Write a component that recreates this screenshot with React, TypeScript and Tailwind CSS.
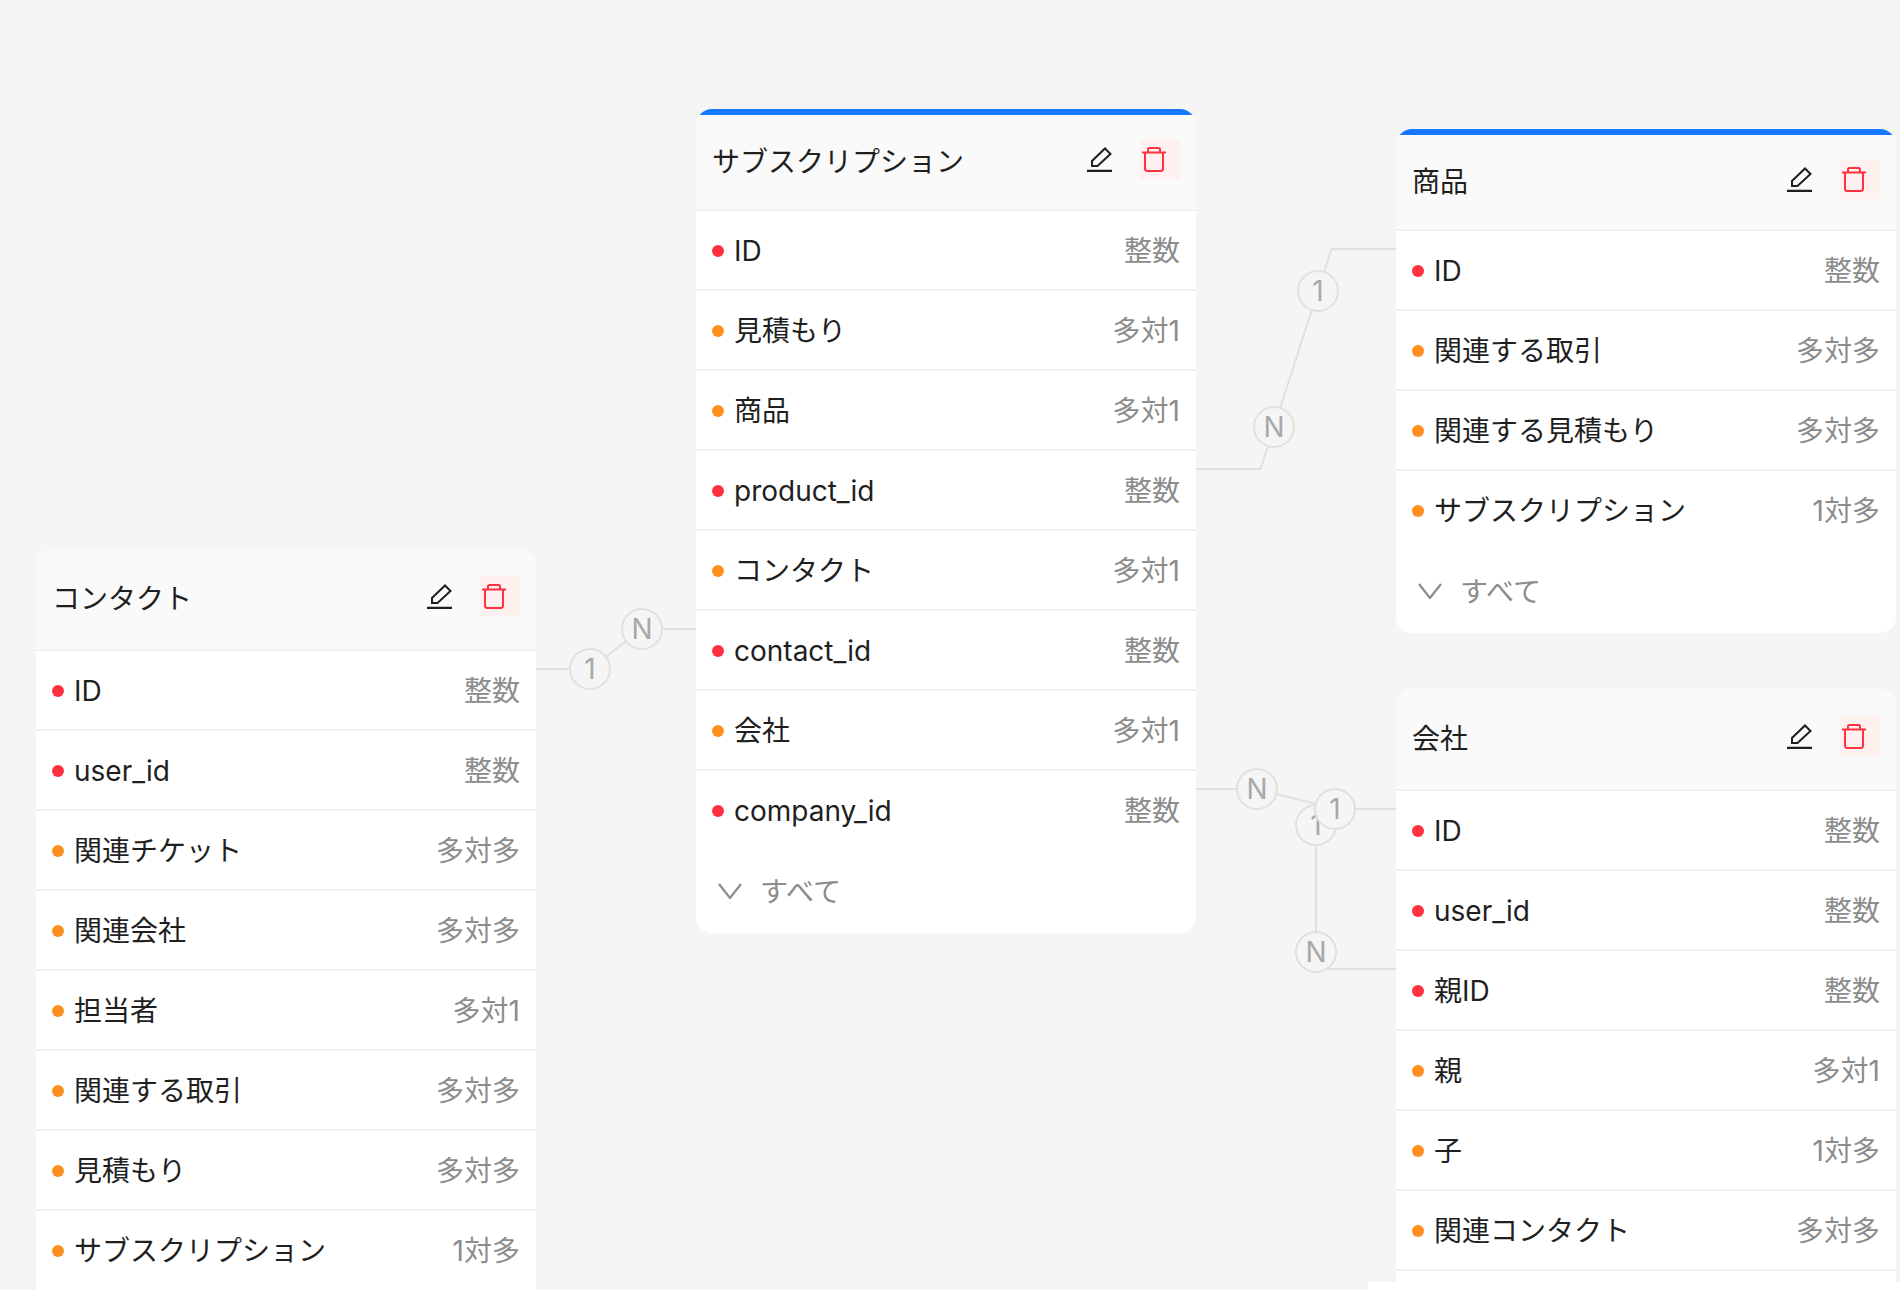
const fontStack = "font-['Inter','Noto_Sans_CJK_JP',sans-serif]";

type Field = { name: string; type: string; key?: boolean; bare?: boolean };

const contactFields: Field[] = [
  { name: "ID", type: "整数", key: true },
  { name: "user_id", type: "整数", key: true },
  { name: "関連チケット", type: "多対多" },
  { name: "関連会社", type: "多対多" },
  { name: "担当者", type: "多対1" },
  { name: "関連する取引", type: "多対多" },
  { name: "見積もり", type: "多対多" },
  { name: "サブスクリプション", type: "1対多", bare: true },
];

const subscriptionFields: Field[] = [
  { name: "ID", type: "整数", key: true },
  { name: "見積もり", type: "多対1" },
  { name: "商品", type: "多対1" },
  { name: "product_id", type: "整数", key: true },
  { name: "コンタクト", type: "多対1" },
  { name: "contact_id", type: "整数", key: true },
  { name: "会社", type: "多対1" },
  { name: "company_id", type: "整数", key: true, bare: true },
];

const productFields: Field[] = [
  { name: "ID", type: "整数", key: true },
  { name: "関連する取引", type: "多対多" },
  { name: "関連する見積もり", type: "多対多" },
  { name: "サブスクリプション", type: "1対多", bare: true },
];

const companyFields: Field[] = [
  { name: "ID", type: "整数", key: true },
  { name: "user_id", type: "整数", key: true },
  { name: "親ID", type: "整数", key: true },
  { name: "親", type: "多対1" },
  { name: "子", type: "1対多" },
  { name: "関連コンタクト", type: "多対多" },
];

function PencilIcon() {
  return (
    <svg viewBox="0 0 25 25" className="h-[25px] w-[25px]" fill="none" stroke="#1f1f1f" strokeWidth="2">
      <path d="M0 24H25" strokeWidth="2.4" />
      <path d="M5 19V14L18 1.5L23.5 7L10.5 19Z" strokeLinejoin="miter" />
    </svg>
  );
}

function TrashIcon() {
  return (
    <svg viewBox="0 0 24 25" className="h-[25px] w-[24px]" fill="none" stroke="#ff3141" strokeWidth="2">
      <path d="M0.5 6.5V5.5H23.5V6.5" />
      <path d="M6 5V2.5Q6 1 7.5 1H16.5Q18 1 18 2.5V5" />
      <path d="M3 5.5V21.5Q3 24 5.5 24H18.5Q21 24 21 21.5V5.5" />
    </svg>
  );
}

function TableCard({
  title,
  fields,
  accent,
  expand,
  className,
}: {
  title: string;
  fields: Field[];
  accent?: boolean;
  expand?: boolean;
  className: string;
}) {
  return (
    <div className={`absolute w-[500px] overflow-hidden rounded-2xl bg-white ${className}`}>
      {accent && <div className="h-[6px] bg-[#1677ff]" />}
      <div
        className={`flex items-center justify-between border-b-2 border-[#f0f0f0] bg-[#fafafa] px-4 ${accent ? "h-[96px]" : "h-[102px]"}`}
      >
        <span className="text-[28px] leading-none text-[#1f1f1f]">{title}</span>
        <div className="mb-[6px] flex items-center gap-[28px]">
          <PencilIcon />
          <div className="flex h-10 w-10 items-center bg-[#fff1f0] pl-0.5">
            <TrashIcon />
          </div>
        </div>
      </div>
      {fields.map((f) => (
        <div
          key={f.name}
          className={`flex h-20 items-center justify-between px-4 ${f.bare ? "" : "border-b-2 border-[#f0f0f0] pt-[2px]"}`}
        >
          <div className="flex items-center gap-[10px]">
            <span className={`h-3 w-3 rounded-full ${f.key ? "bg-[#ff3141]" : "bg-[#ff8f1f]"}`} />
            <span className="text-[28px] leading-none text-[#1f1f1f]">{f.name}</span>
          </div>
          <span className="text-[28px] leading-none text-[#8c8c8c]">{f.type}</span>
        </div>
      ))}
      {expand ? (
        <div className="flex h-[82px] items-start gap-[18px] pl-[22px] pt-[23px]">
          <svg viewBox="0 0 24 16" className="mt-[9px] h-4 w-6" fill="none" stroke="#8c8c8c" strokeWidth="2.2">
            <path d="M1 1L12 15L23 1" />
          </svg>
          <span className="text-[28px] leading-[36px] text-[#8c8c8c]">すべて</span>
        </div>
      ) : (
        // these tables carry on below the bottom of the window
        <div className="h-20" />
      )}
    </div>
  );
}

function Badge({ label, x, y }: { label: string; x: number; y: number }) {
  return (
    <div
      className="absolute flex h-[42px] w-[42px] items-center justify-center rounded-full border-2 border-[#e0e0e0] bg-[#f5f5f5] text-[28px] leading-none text-[#a8a8a8]"
      style={{ left: x - 21, top: y - 21 }}
    >
      {label}
    </div>
  );
}

export default function App() {
  return (
    <div className={`relative h-[1290px] w-[1900px] overflow-hidden bg-[#f5f5f5] ${fontStack}`}>
      {/* relation lines */}
      <svg className="absolute left-0 top-0 h-[1290px] w-[1900px]" fill="none" stroke="#e0e0e0" strokeWidth="2">
        <path d="M536 669H590L642 629H696" />
        <path d="M1396 249H1331.5L1260.5 469H1196" />
        <path d="M1196 789H1257L1335 809H1396" />
        <path d="M1316 825V969H1396" />
      </svg>

      <TableCard title="コンタクト" fields={contactFields} className="left-9 top-[549px]" />
      <TableCard title="サブスクリプション" fields={subscriptionFields} accent expand className="left-[696px] top-[109px]" />
      <TableCard title="商品" fields={productFields} accent expand className="left-[1396px] top-[129px]" />
      <TableCard title="会社" fields={companyFields} className="left-[1396px] top-[689px]" />

      <Badge label="1" x={590} y={669} />
      <Badge label="N" x={642} y={629} />
      <Badge label="1" x={1318} y={291} />
      <Badge label="N" x={1274} y={427} />
      <Badge label="N" x={1257} y={789} />
      <Badge label="1" x={1316} y={825} />
      <Badge label="1" x={1335} y={809} />
      <Badge label="N" x={1316} y={952} />

      <div className="absolute bottom-0 left-[1368px] right-0 h-2 bg-white" />
    </div>
  );
}
